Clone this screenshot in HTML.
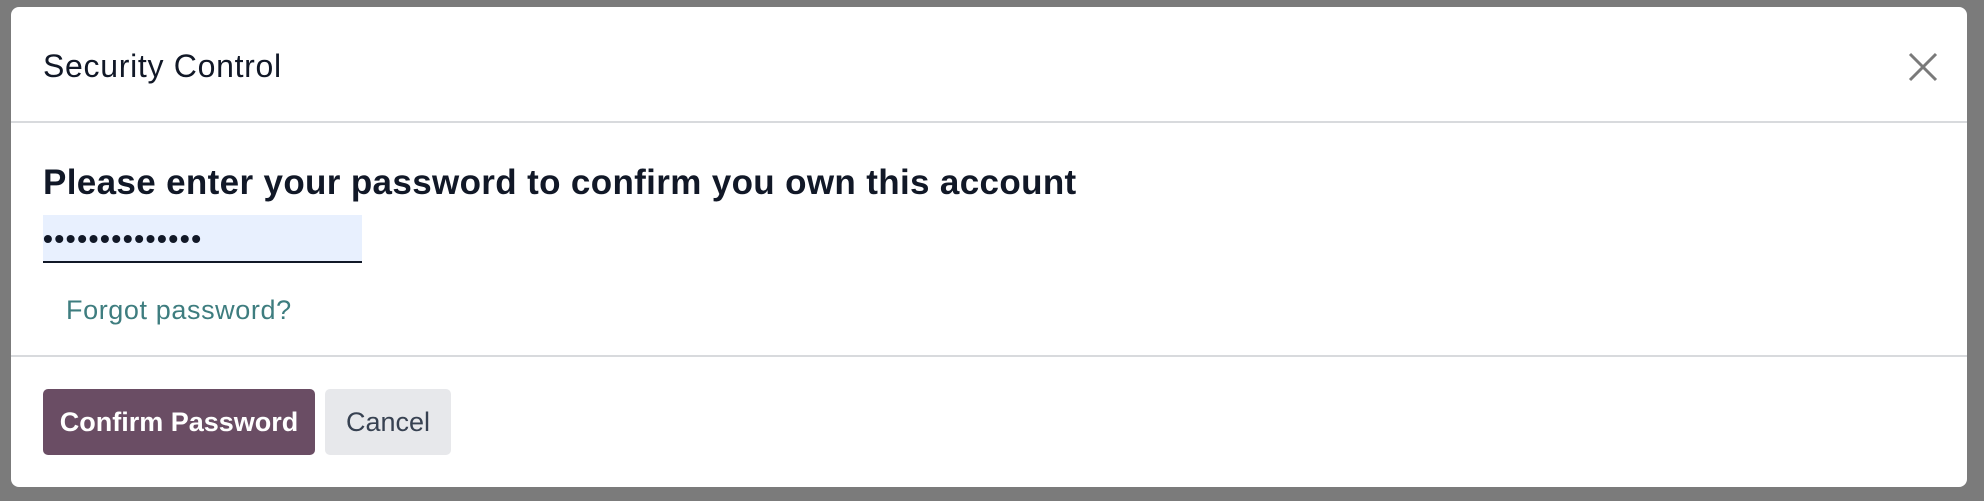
<!DOCTYPE html>
<html><head><meta charset="utf-8"><style>
html,body{margin:0;padding:0;width:1984px;height:501px;overflow:hidden;background:#7b7b7b;font-family:"Liberation Sans",sans-serif;}
.m{position:absolute;left:11px;top:7px;width:1956px;height:480px;background:#fff;border-radius:8px;}
.t{position:absolute;left:32px;top:41px;font-size:32px;color:#111827;letter-spacing:0.7px;}
.x{position:absolute;left:1896px;top:44px;}
.hr{position:absolute;left:0;right:0;height:2px;background:#d8dadd;}
.h{position:absolute;left:32px;top:156px;font-size:35px;font-weight:bold;color:#111827;letter-spacing:0.35px;}
.in{position:absolute;left:32px;top:208px;width:319px;height:46px;background:#e8f0fe;border-bottom:2px solid #111827;}
.dots{position:absolute;left:0;top:8px;font-size:28px;letter-spacing:1.6px;color:#111827;font-weight:bold}
.f{position:absolute;left:55px;top:288px;font-size:27px;color:#3e7d7f;letter-spacing:0.6px;}
.b1{position:absolute;left:32px;top:382px;width:272px;height:66px;background:#6a4d64;border-radius:5px;color:#fff;font-size:27px;font-weight:bold;line-height:66px;text-align:center;}
.b2{position:absolute;left:314px;top:382px;width:126px;height:66px;background:#e7e8eb;border-radius:5px;color:#374151;font-size:27px;line-height:66px;text-align:center;}
</style></head><body>
<div class="m">
<div class="t">Security Control</div>
<svg class="x" width="32" height="32" viewBox="0 0 32 32"><path d="M3 3L29 29M29 3L3 29" stroke="#7a7a7a" stroke-width="3"/></svg>
<div class="hr" style="top:114px"></div>
<div class="h">Please enter your password to confirm you own this account</div>
<div class="in"><div class="dots">••••••••••••••</div></div>
<div class="f">Forgot password?</div>
<div class="hr" style="top:348px"></div>
<div class="b1">Confirm Password</div>
<div class="b2">Cancel</div>
</div>
</body></html>
